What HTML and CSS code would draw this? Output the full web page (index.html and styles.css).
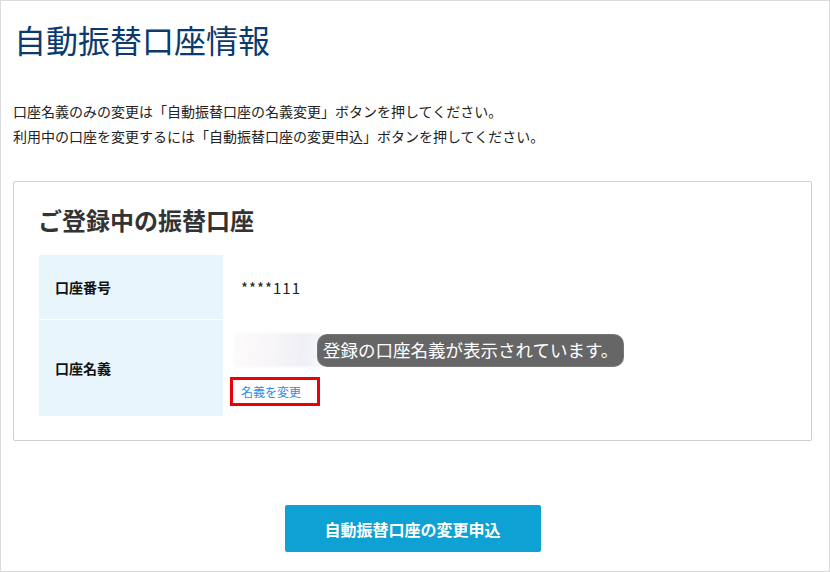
FILE: index.html
```html
<!DOCTYPE html>
<html lang="ja">
<head>
    <meta charset="UTF-8">
    <meta name="viewport" content="width=device-width, initial-scale=1.0">
    <title>自動振替口座情報</title>
    <link rel="stylesheet" href="styles.css">
</head>
<body>
    <div class="page">
        <h1>自動振替口座情報</h1>
        <p class="lead">
            口座名義のみの変更は「自動振替口座の名義変更」ボタンを押してください。<br>
            利用中の口座を変更するには「自動振替口座の変更申込」ボタンを押してください。
        </p>

        <div class="card">
            <h2>ご登録中の振替口座</h2>
            <div class="info">
                <div class="label">口座番号</div>
                <div class="value number">****111</div>
                <div class="label">口座名義</div>
                <div class="value name">
                    <div class="name-row">
                        <div class="blurred"></div>
                        <span class="note">登録の口座名義が表示されています。</span>
                    </div>
                    <a href="#" class="change-link">名義を変更</a>
                </div>
            </div>
        </div>

        <div class="actions">
            <button type="button">自動振替口座の変更申込</button>
        </div>
    </div>
</body>
</html>
```

FILE: styles.css
```css
body {
    margin: 0;
    font-family: "Noto Sans CJK JP", "Noto Sans", sans-serif;
    color: #222;
    background-color: #fff;
}

.page {
    width: 830px;
    height: 572px;
    box-sizing: border-box;
    border: 1px solid #dcdcdc;
    padding: 18px 17px 0 12px;
}

h1 {
    margin: 0 0 0 1px;
    font-size: 32px;
    line-height: 40px;
    font-weight: normal;
    color: #0b3a6e;
}

.lead {
    margin: 40px 0 0 0;
    font-size: 14px;
    line-height: 25px;
    color: #222;
}

.card {
    margin-top: 32px;
    border: 1px solid #cfcfcf;
    border-radius: 2px;
    padding: 20px 24px 24px 25px;
}

h2 {
    margin: 0 0 17px -1px;
    font-size: 24px;
    line-height: 36px;
    font-weight: bold;
    color: #333;
}

.info {
    display: grid;
    grid-template-columns: 184px 1fr;
    row-gap: 1px;
}

.label {
    display: flex;
    align-items: center;
    padding-left: 16px;
    background-color: #e8f5fc;
    font-size: 14px;
    font-weight: bold;
    color: #111;
}

.value {
    padding-left: 18px;
    font-size: 14px;
}

.number {
    height: 64px;
    display: flex;
    align-items: center;
    font-size: 15px;
    letter-spacing: 1px;
}

.name {
    height: 96px;
    box-sizing: border-box;
    padding-top: 13px;
}

.name-row {
    display: flex;
    align-items: center;
    margin-left: -7px;
}

.blurred {
    width: 88px;
    height: 34px;
    background: linear-gradient(100deg, #fdfbfc 0%, #f8f6f8 40%, #eff0f6 75%, #f6f7fa 100%);
    filter: blur(1px);
}

/* annotation bubble sits over the blurred name */
.note {
    position: relative;
    z-index: 1;
    margin-left: -4px;
    padding: 3px 5px 4px 5px;
    background-color: #666;
    border-radius: 9px;
    color: #fff;
    font-size: 17.5px;
    line-height: 24px;
    box-shadow: 0 0 0 1px #777;
}

.change-link {
    display: flex;
    align-items: center;
    width: 90px;
    height: 29px;
    box-sizing: border-box;
    margin: 10px 0 0 -11px;
    padding-left: 8px;
    border: 3px solid #e8000b;
    font-size: 12px;
    color: #2a8ceb;
    text-decoration: none;
}

.actions {
    margin-top: 64px;
    display: flex;
    justify-content: center;
}

button {
    width: 256px;
    height: 47px;
    border: none;
    border-radius: 2px;
    background-color: #0ea1d4;
    color: #fff;
    font-family: inherit;
    font-size: 16px;
    font-weight: bold;
    cursor: pointer;
}

button:hover {
    background-color: #0b8dbb;
}
```
